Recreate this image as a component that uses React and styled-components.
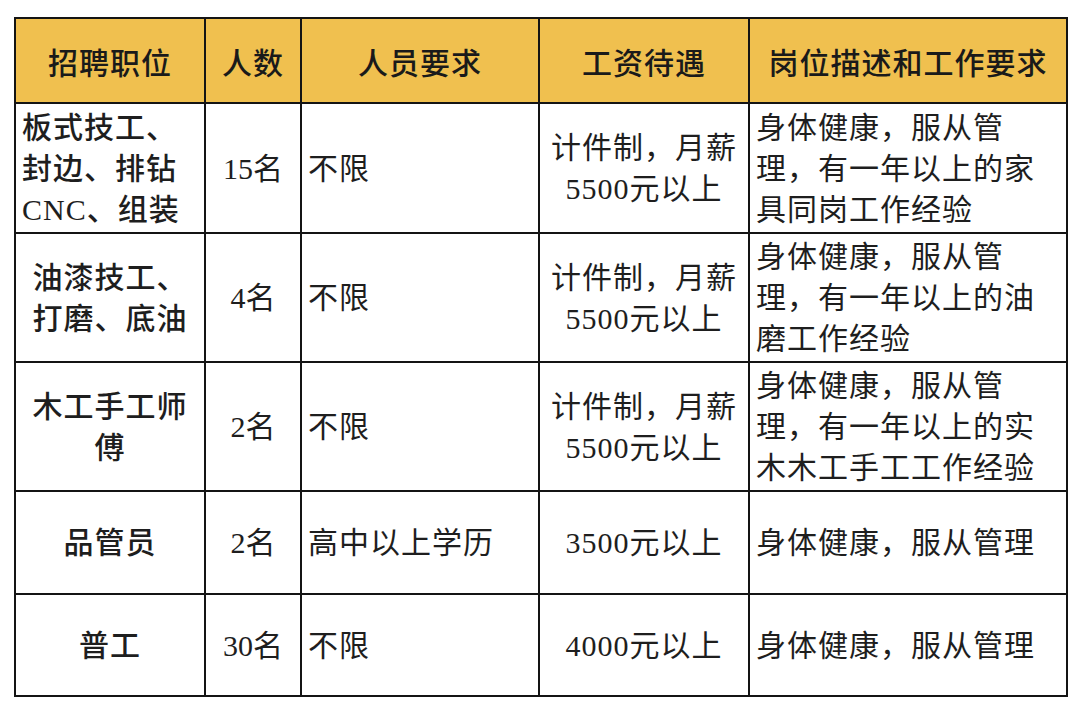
import React from "react";
import styled, { createGlobalStyle } from "styled-components";

const GlobalStyle = createGlobalStyle`
  html, body {
    margin: 0;
    padding: 0;
    background: #ffffff;
  }
`;

const Page = styled.div`
  padding: 17px 0 0 14px;
  font-family: "Liberation Serif", "Noto Sans CJK SC", serif;
  color: #1c1c1c;
`;

const Table = styled.table`
  width: 1052px;
  table-layout: fixed;
  border-collapse: collapse;
  border: 2px solid #141414;
`;

const HeadRow = styled.tr`
  height: 85px;
  background: #f0c04f;
`;

const Row = styled.tr`
  height: ${(p) => p.$h}px;
`;

const HeadCell = styled.th`
  border: 2px solid #141414;
  font-size: 30px;
  font-weight: 500;
  letter-spacing: 1px;
  text-align: center;
  vertical-align: middle;
  padding: 0;
  color: #1a1a1a;
`;

const Cell = styled.td`
  border: 2px solid #141414;
  font-size: 30px;
  line-height: 41px;
  letter-spacing: ${(p) => (p.$tight ? "0" : "1px")};
  font-weight: ${(p) => (p.$bold ? 500 : 400)};
  text-align: ${(p) => p.$align || "center"};
  vertical-align: middle;
  padding: 0;
  padding-left: ${(p) => (p.$align === "left" ? "6px" : "0")};
  color: #1e1e1e;
  white-space: nowrap;
`;

const rows = [
  {
    h: 130,
    title: ["板式技工、", "封边、排钻", "CNC、组装"],
    titleAlign: "left",
    count: "15名",
    req: "不限",
    pay: ["计件制，月薪", "5500元以上"],
    desc: ["身体健康，服从管", "理，有一年以上的家", "具同岗工作经验"],
  },
  {
    h: 129,
    title: ["油漆技工、", "打磨、底油"],
    count: "4名",
    req: "不限",
    pay: ["计件制，月薪", "5500元以上"],
    desc: ["身体健康，服从管", "理，有一年以上的油", "磨工作经验"],
  },
  {
    h: 129,
    title: ["木工手工师", "傅"],
    count: "2名",
    req: "不限",
    pay: ["计件制，月薪", "5500元以上"],
    desc: ["身体健康，服从管", "理，有一年以上的实", "木木工手工工作经验"],
  },
  {
    h: 103,
    title: ["品管员"],
    count: "2名",
    req: "高中以上学历",
    pay: ["3500元以上"],
    desc: ["身体健康，服从管理"],
  },
  {
    h: 102,
    title: ["普工"],
    count: "30名",
    req: "不限",
    pay: ["4000元以上"],
    desc: ["身体健康，服从管理"],
  },
];

const Lines = ({ items }) =>
  items.map((t, i) => (
    <React.Fragment key={i}>
      {i > 0 && <br />}
      {t}
    </React.Fragment>
  ));

export default function App() {
  return (
    <Page>
      <GlobalStyle />
      <Table>
        <colgroup>
          <col style={{ width: 190 }} />
          <col style={{ width: 96 }} />
          <col style={{ width: 238 }} />
          <col style={{ width: 210 }} />
          <col style={{ width: 318 }} />
        </colgroup>
        <thead>
          <HeadRow>
            <HeadCell>招聘职位</HeadCell>
            <HeadCell>人数</HeadCell>
            <HeadCell>人员要求</HeadCell>
            <HeadCell>工资待遇</HeadCell>
            <HeadCell>岗位描述和工作要求</HeadCell>
          </HeadRow>
        </thead>
        <tbody>
          {rows.map((r, i) => (
            <Row key={i} $h={r.h}>
              <Cell $bold $align={r.titleAlign}>
                <Lines items={r.title} />
              </Cell>
              <Cell $tight>{r.count}</Cell>
              <Cell $align="left">{r.req}</Cell>
              <Cell>
                <Lines items={r.pay} />
              </Cell>
              <Cell $align="left">
                <Lines items={r.desc} />
              </Cell>
            </Row>
          ))}
        </tbody>
      </Table>
    </Page>
  );
}
